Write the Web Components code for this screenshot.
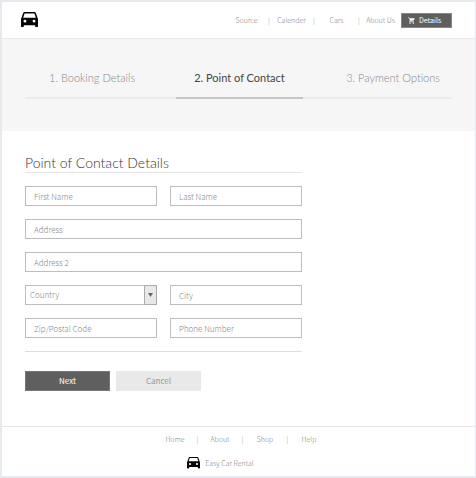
<!DOCTYPE html>
<html lang="en">
<head>
<meta charset="utf-8">
<title>Easy Car Rental</title>
<style>
:root{--small:"Noto Sans CJK SC","Noto Sans",sans-serif;--head:Lato,"Open Sans",sans-serif}
html,body{margin:0;min-height:100%}
body{box-sizing:border-box;min-height:100vh;display:flex;background:#fff;font:300 8px/12px var(--small);color:#888;font-variant-ligatures:none}
</style>
</head>
<body>
<rental-page></rental-page>
<script>
const define = (name, html, setup) => customElements.define(name, class extends HTMLElement {
  connectedCallback() {
    if (this.shadowRoot) return;
    const root = this.attachShadow({mode: "open"});
    root.innerHTML = "<style>*{box-sizing:border-box}:host{display:block;box-sizing:border-box}</style>" + html;
    if (setup) setup(this, root);
  }
});

define("car-icon", `
<style>:host{width:17px}:host([small]){width:13px}svg{display:block;width:100%}</style>
<svg viewBox="0 0 18 16" fill="#050505" aria-hidden="true"><path fill-rule="evenodd" d="M3.7 0h10.6c.7 0 1.2.4 1.4 1L18 7.5V15c0 .6-.4 1-1 1h-1c-.6 0-1-.4-1-1v-1H3v1c0 .6-.4 1-1 1H1c-.6 0-1-.4-1-1V7.500L2.300 1C2.500.4 3 0 3.700 0zM3.800 1.500L2.300 6h13.400l-1.500-4.500zM4.200 8.200a1.500 1.500 0 1 0 0 3 1.500 1.500 0 0 0 0-3zM13.800 8.200a1.500 1.500 0 1 0 0 3 1.500 1.500 0 0 0 0-3z"/></svg>`);

define("nav-item", `
<style>
:host{display:flex;width:45px;align-items:center;font-size:7px}
:host([last]){width:41px}
:host([last]) span{display:none}
a{flex:1;text-align:center;white-space:nowrap;color:#888;text-decoration:none}
span{width:2px;color:#888}
</style><a href="#"><slot></slot></a><span>|</span>`);

define("site-header", `
<style>
:host{display:flex;align-items:center;justify-content:space-between;height:37px;padding:0 23px 0 19px;border-bottom:1px solid #e9e9e9}
nav{display:flex;align-items:center}
button{display:flex;align-items:center;gap:4px;width:51px;height:15px;padding:0 0 0 6px;border:1px solid #888;background:#5f5f5f;color:#fff;font:7px/12px var(--small)}
svg{width:7px;height:7px}
</style>
<car-icon></car-icon>
<nav aria-label="Main">
<nav-item>Source</nav-item><nav-item>Calender</nav-item><nav-item>Cars</nav-item><nav-item last>About Us</nav-item>
<button type="button"><svg viewBox="1 2 21 20" fill="#fff" aria-hidden="true"><path d="M7 18a2 2 0 1 0 0 4 2 2 0 0 0 0-4zM1 2v2h2l3.600 7.600L5.200 14c-.7 1.300.3 3 1.800 3h12v-2H7.400l1.100-2h7.500c.7 0 1.400-.4 1.700-1L21.700 5H5.200L4.300 2zM17 18a2 2 0 1 0 0 4 2 2 0 0 0 0-4z"/></svg>Details</button>
</nav>`);

define("booking-step", `
<style>
:host{padding-bottom:11px;border-bottom:2px solid #ebebeb;font:300 11px/16px var(--head);font-variant-ligatures:none;color:#888;text-align:center;white-space:nowrap}
:host([align=start]){text-align:left;padding-left:24px}
:host([align=end]){text-align:right;padding-right:12px}
:host([active]){border-color:#c4c4c4;color:#444;font-weight:400}
</style><slot></slot>`);

define("booking-steps", `
<style>:host{display:grid;grid-template-columns:151fr 127fr 149fr;padding:31px 23px;height:92px;align-content:start;background:#f6f6f6}</style>
<booking-step align="start">1. Booking Details</booking-step>
<booking-step active>2. Point of Contact</booking-step>
<booking-step align="end">3. Payment Options</booking-step>`);

define("text-field", `
<style>
:host([wide]){grid-column:1/-1}
input{display:block;width:100%;height:20px;margin:0;padding:0 8px;border:1px solid #bdbdbd;border-radius:0;outline:0;background:#fff;color:#555;font:300 8px/12px var(--small)}
input::placeholder{color:#888;opacity:1}
</style><input type="text">`, (host, root) => {
  const input = root.querySelector("input");
  input.placeholder = host.getAttribute("label");
  input.setAttribute("aria-label", host.getAttribute("label"));
});

define("country-select", `
<style>
:host{position:relative}
select{display:block;appearance:none;width:100%;height:20px;margin:0;padding:0 16px 0 4px;border:1px solid #bdbdbd;border-radius:0;background:#fff;color:#888;font:300 8px/12px var(--small)}
svg{position:absolute;right:0;top:0;width:13px;height:20px;pointer-events:none}
</style>
<select aria-label="Country"><option>Country</option></select>
<svg viewBox="0 0 13 20" aria-hidden="true"><path d="M.5.5h12v19H.5z" fill="#e8e8e8" stroke="#aaa"/><path d="M4 8h5l-2.500 4z" fill="#666"/></svg>`);

define("action-button", `
<style>
button{width:85px;height:20px;padding:0;border:1px solid #e9e9e9;background:#e9e9e9;color:#999;font:8px/12px var(--small)}
:host([primary]) button{background:#5f5f5f;border-color:#777;color:#fff}
</style><button type="button"><slot></slot></button>`);

define("contact-form", `
<style>
:host{padding:24px 23px 0}
form{max-width:277px}
h1{margin:0 0 13px;padding-bottom:1px;border-bottom:1px solid #e6e6e6;font:300 14px/16px var(--head);font-variant-ligatures:none;color:#333}
.fields{display:grid;grid-template-columns:1fr 1fr;gap:13px;padding-bottom:13px;border-bottom:1px solid #dfdfdf}
.actions{display:flex;gap:6px;padding-top:19px}
</style>
<form>
<h1>Point of Contact Details</h1>
<div class="fields">
<text-field label="First Name"></text-field><text-field label="Last Name"></text-field>
<text-field wide label="Address"></text-field>
<text-field wide label="Address 2"></text-field>
<country-select></country-select><text-field label="City"></text-field>
<text-field label="Zip/Postal Code"></text-field><text-field label="Phone Number"></text-field>
</div>
<div class="actions"><action-button primary>Next</action-button><action-button>Cancel</action-button></div>
</form>`);

define("site-footer", `
<style>
:host{display:flex;flex-direction:column;align-items:center;gap:12px;padding:6px 0 7px;border-top:1px solid #e6e6e6}
nav{display:flex;padding-left:6px}
.brand{display:flex;align-items:center;gap:5px;padding-right:36px;font-size:7px}
</style>
<nav aria-label="Footer"><nav-item>Home</nav-item><nav-item>About</nav-item><nav-item>Shop</nav-item><nav-item last>Help</nav-item></nav>
<div class="brand"><car-icon small></car-icon><span>Easy Car Rental</span></div>`);

define("rental-page", `
<style>
:host{flex:1;min-width:0;display:flex;flex-direction:column;border:solid #e6eaef;border-width:2px 1px 2px 2px}
main{flex:1}
</style>
<site-header></site-header>
<main><booking-steps></booking-steps><contact-form></contact-form></main>
<site-footer></site-footer>`);
</script>
</body>
</html>
